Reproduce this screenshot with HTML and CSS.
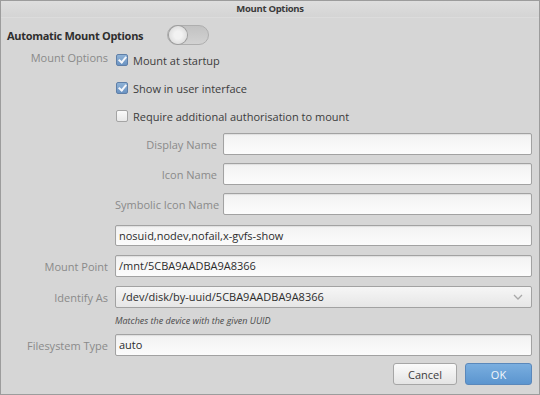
FILE: index.html
```html
<!DOCTYPE html>
<html lang="en">
  <head>
    <meta charset="utf-8">
    <title>Mount Options</title>
    <link rel="stylesheet" href="styles.css">
  </head>
  <body>
    <div class="window">
      <div class="titlebar">Mount Options</div>
      <div class="content">
        <div class="auto">
          <span class="auto-title">Automatic Mount Options</span>
          <span class="toggle"><span class="knob"></span></span>
        </div>

        <div class="form">
          <div class="lbl lbl-top">Mount Options</div>
          <div class="checks">
            <label class="check"><span class="box on"></span>Mount at startup</label>
            <label class="check"><span class="box on"></span>Show in user interface</label>
            <label class="check last"><span class="box"></span>Require additional authorisation to mount</label>

            <div class="names">
              <div class="lbl">Display Name</div>
              <div class="entry"></div>
              <div class="lbl">Icon Name</div>
              <div class="entry"></div>
              <div class="lbl">Symbolic Icon Name</div>
              <div class="entry"></div>
            </div>
            <div class="entry wide">nosuid,nodev,nofail,x-gvfs-show</div>
          </div>

          <div class="lbl">Mount Point</div>
          <div class="entry">/mnt/5CBA9AADBA9A8366</div>

          <div class="lbl">Identify As</div>
          <div class="combo">
            <span>/dev/disk/by-uuid/5CBA9AADBA9A8366</span>
            <svg width="10" height="6" viewBox="0 0 10 6"><path d="M1 1 L5 5 L9 1" fill="none" stroke="#a8a8a8" stroke-width="1.3"/></svg>
          </div>

          <div></div>
          <div class="hint">Matches the device with the given UUID</div>

          <div class="lbl">Filesystem Type</div>
          <div class="entry">auto</div>
        </div>

        <div class="buttons">
          <button class="btn">Cancel</button>
          <button class="btn ok">OK</button>
        </div>
      </div>
    </div>
  </body>
</html>
```

FILE: styles.css
```css
html, body {
    margin: 0;
    padding: 0;
}
body {
    font-family: 'Open Sans', 'DejaVu Sans', sans-serif;
    font-size: 11px;
    color: #3c3c3c;
    background-color: #d6d6d6;
}
.window {
    width: 540px;
    height: 395px;
    box-sizing: border-box;
    border: 1px solid #9c9c9c;
    background-color: #d6d6d6;
}
.titlebar {
    height: 16px;
    line-height: 15px;
    text-align: center;
    font-size: 9.5px;
    letter-spacing: -0.3px;
    font-weight: 700;
    color: #3a3a3a;
    background: linear-gradient(#dedede, #d4d4d4);
    border-bottom: 1px solid #dcdcdc;
}
.content {
    padding: 0 7px 0 6px;
}
.auto {
    display: flex;
    align-items: center;
    height: 28px;
    margin-top: 3px;
}
.auto-title {
    font-weight: 700;
    font-size: 11px;
    letter-spacing: -0.3px;
    color: #2e2e2e;
    width: 160px;
    white-space: nowrap;
}
.toggle {
    display: inline-block;
    width: 40px;
    height: 18px;
    border: 1px solid #aeaeae;
    border-radius: 10px;
    background: linear-gradient(#c2c2c2, #d2d2d2);
    position: relative;
}
.knob {
    position: absolute;
    left: 1px;
    top: 0;
    width: 18px;
    height: 18px;
    border-radius: 50%;
    background: radial-gradient(circle, #f2f2f2 30%, #e4e4e4 60%, #d0d0d0 100%);
    box-shadow: 0 0 0 1px #9e9e9e;
}
.form {
    display: grid;
    grid-template-columns: 101px 1fr;
    column-gap: 7px;
    row-gap: 9px;
    align-items: center;
}
.lbl {
    text-align: right;
    color: #8a8a8a;
    white-space: nowrap;
}
.lbl-top {
    align-self: start;
    margin-top: 1px;
}
.checks {
    display: flex;
    flex-direction: column;
    padding-top: 2px;
}
.check {
    display: flex;
    align-items: center;
    height: 18px;
    margin-bottom: 10px;
    color: #3c3c3c;
}
.check.last {
    margin-bottom: 8px;
}
.box {
    width: 10px;
    height: 10px;
    margin: 0 5px 0 1px;
    border: 1px solid #a4a4a4;
    border-radius: 2px;
    background: linear-gradient(#fafafa, #e8e8e8);
    position: relative;
}
.box.on {
    background: linear-gradient(#8fb2d6, #6b93c2);
    border-color: #5f7fa8;
}
.box.on::after {
    content: "";
    position: absolute;
    left: 3px;
    top: 0;
    width: 3px;
    height: 6px;
    border: solid #f4f6fa;
    border-width: 0 2px 2px 0;
    transform: rotate(40deg);
}
.names {
    display: grid;
    grid-template-columns: 102px 1fr;
    column-gap: 6px;
    row-gap: 8px;
    align-items: center;
    margin-bottom: 10px;
}
.entry, .combo {
    height: 20px;
    line-height: 20px;
    padding: 0 3px;
    border: 1px solid #a2a2a2;
    border-radius: 2px;
    background: linear-gradient(#f2f2f2, #fcfcfc);
    color: #2c2c2c;
    font-size: 11px;
    box-shadow: inset 0 1px 1px rgba(0,0,0,.08);
}
.entry.wide {
    height: 19px;
    line-height: 19px;
}
.combo {
    display: flex;
    justify-content: space-between;
    align-items: center;
    padding: 0 8px 0 6px;
    background: linear-gradient(#f6f6f6, #e6e6e6);
    box-shadow: none;
}
.hint {
    font-style: italic;
    font-size: 9px;
    color: #4a4a4a;
    margin: -3px 0 -2px 0;
}
.buttons {
    display: flex;
    justify-content: flex-end;
    gap: 8px;
    margin-top: 7px;
}
.btn {
    font-family: inherit;
    font-size: 11px;
    height: 22px;
    width: 64px;
    border: 1px solid #a6a6a6;
    border-radius: 3px;
    background: linear-gradient(#fbfbfb, #e4e4e4);
    color: #3c3c3c;
    padding: 0;
}
.btn.ok {
    width: 67px;
    border-color: #5a88bb;
    background: linear-gradient(#7aaedf, #5b95cf);
    color: #f2f6fb;
}
```
